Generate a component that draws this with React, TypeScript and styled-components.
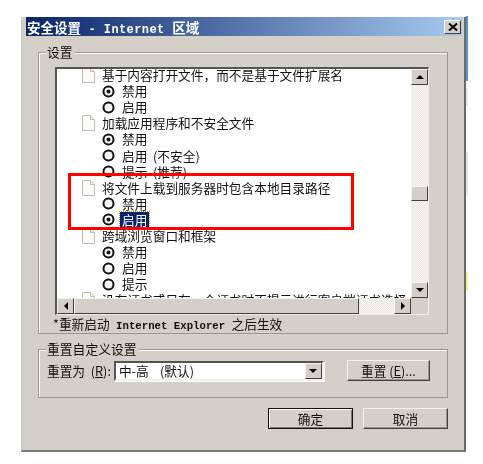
import React from "react";
import styled, { createGlobalStyle } from "styled-components";

const Global = createGlobalStyle`
  html, body { margin: 0; padding: 0; background: #fff; }
  body { width: 483px; height: 464px; overflow: hidden; font-family: "Noto Sans CJK SC", "Liberation Sans", sans-serif; }
  * { box-sizing: border-box; }
`;
const Page = styled.div`
  width: 483px; height: 464px; padding: 17px 17px 12px 21px; background: #fff; position: relative;
`;
const Dialog = styled.div`
  width: 445px; height: 435px; background: #d4d0c8; padding: 0 2px 3px 4px;
  border-right: 2px solid #6a6a6a; border-bottom: 2px solid #777;
  border-left: 1px solid #c8c5bc; display: flex; flex-direction: column; filter: blur(0.4px);
  color: #111; font-size: 12.7px;
`;
const BehindEdge = styled.div`
  position: absolute; left: 466px; top: 16px; width: 2px; height: 275px;
  background: linear-gradient(180deg,
    #5b93d2 0, #5b93d2 65px, #fff 65px, #fff 72px, #e8e8e8 72px, #e8e8e8 90px, #fff 90px,
    #fff 136px, #e6e6e6 136px, #e6e6e6 180px, #fff 180px, #fff 256px, #f5ee9a 256px, #f5ee9a 275px);
`;
const TitleBar = styled.div`
  height: 19px; flex: none; display: flex; align-items: center; justify-content: space-between;
  background: linear-gradient(90deg, #0a246a, #a6caf0); color: #fff; padding: 0 1px 0 1px; font-weight: 700; font-size: 13.5px; white-space: pre;
`;
const TitleMono = styled.span`font-family: "Liberation Mono", monospace; font-size: 12px; letter-spacing: 0.4px;`;
const NoteMono = styled.span`font-family: "Liberation Mono", monospace; font-size: 10.7px; font-weight: 700;`;
const CloseBtn = styled.div`
  width: 17px; height: 14px; background: #d4d0c8; display: flex; align-items: center; justify-content: center;
  border: 1px solid; border-color: #fff #404040 #404040 #fff;
`;
const Content = styled.div`
  flex: 1; display: flex; flex-direction: column; padding: 16px 14px 0 12px; min-height: 0;
`;
const Group = styled.div<{ $h: number; $mt?: number }>`
  height: ${p => p.$h}px; margin-top: ${p => p.$mt ?? 0}px; position: relative; flex: none;
  box-shadow: inset 0 0 0 1px #9a978f, inset 1px 1px 0 1px #fff;
`;
const Legend = styled.div`
  position: absolute; left: 8px; top: -9px; background: #d4d0c8; padding: 0 2px 0 1px; line-height: 17px; font-size: 12.8px;
`;
const GroupBody = styled.div`padding: 15px 0 0 17px;`;
const ListFrame = styled.div`
  width: 374px; height: 248px; background: #fff; position: relative; overflow: hidden;
  border-top: 2px solid #555; border-left: 2px solid #555; border-right: 1px solid #eee; border-bottom: 1px solid #eee;
  display: grid; grid-template-columns: 1fr 17px; grid-template-rows: 1fr 16px;
`;
const List = styled.div`overflow: hidden; padding: 0 0 0 25px;`;
const ListInner = styled.div`margin-top: -2px;`;
const Row = styled.div`
  height: 16.1px; display: flex; align-items: center; white-space: pre; line-height: 16px;
`;
const HeadRow = styled(Row)`gap: 7px;`;
const OptRow = styled(Row)`padding-left: 20px; gap: 7px;`;
const Selected = styled.span`
  background: #0a246a; color: #fff; outline: 1px dotted #c8a020; padding: 0 2px; margin-left: -2px; line-height: 15px;
`;
const VBar = styled.div`
  display: flex; flex-direction: column; justify-content: space-between; position: relative;
  background: repeating-conic-gradient(#e9e7e2 0 25%, #f6f5f2 0 50%) 0 0 / 2px 2px;
`;
const HBar = styled.div`
  display: flex;
  background: repeating-conic-gradient(#e9e7e2 0 25%, #f6f5f2 0 50%) 0 0 / 2px 2px;
`;
const SBtn = styled.div`
  width: 17px; height: 16px; flex: none; background: #d4d0c8; display: flex; align-items: center; justify-content: center;
  border: 1px solid; border-color: #f4f3ef #404040 #404040 #f4f3ef;
`;
const VThumb = styled(SBtn)`position: absolute; top: 117px; left: 0; height: 15px;`;
const HThumb = styled(SBtn)`width: 285px; margin-right: auto;`;
const Corner = styled.div`background: #d4d0c8;`;
const Note = styled.div`
  padding: 1px 0 0 0; margin-left: -2px; white-space: pre; line-height: 16px;
`;
const Tri = styled.div<{ $d: "up" | "down" | "left" | "right" }>`
  width: 0; height: 0; border: solid transparent;
  ${p => p.$d === "up" && "border-width: 0 4px 4px; border-bottom-color: #000;"}
  ${p => p.$d === "down" && "border-width: 4px 4px 0; border-top-color: #000;"}
  ${p => p.$d === "left" && "border-width: 4px 4px 4px 0; border-right-color: #000;"}
  ${p => p.$d === "right" && "border-width: 4px 0 4px 4px; border-left-color: #000;"}
`;
const ResetRow = styled.div`display: flex; align-items: center; padding: 11px 0 0 9px; white-space: pre;`;
const Select = styled.div`
  width: 210px; height: 20px; margin-left: 3px; background: #fff; display: flex; align-items: center; justify-content: space-between;
  border-top: 2px solid #555; border-left: 2px solid #555; border-right: 2px solid #f2f1ed; border-bottom: 2px solid #f2f1ed; padding-left: 3px;
  box-shadow: 1px 1px 0 #fff;
`;
const ResetButton = styled.div`margin-left: 23px;`;
const Button = styled.div<{ $w: number; $def?: boolean }>`
  width: ${p => p.$w}px; height: 21px; background: #d4d0c8; display: flex; align-items: center; justify-content: center; white-space: pre;
  border: 1px solid; border-color: ${p => p.$def ? "#111" : "#f4f3ef #404040 #404040 #f4f3ef"};
  box-shadow: ${p => p.$def ? "inset 1px 1px 0 #fff, inset -1px -1px 0 #777" : "inset -1px -1px 0 #999"};
`;
const Footer = styled.div`display: flex; justify-content: flex-end; gap: 10px; padding: 10px 0 0 0;`;
const Highlight = styled.div`
  position: absolute; left: 68px; top: 173px; width: 286px; height: 57px; border: 3px solid #f00;
`;
const U = styled.span`text-decoration: underline;`;

const Doc = () => (
  <svg width="13" height="16" viewBox="0 0 13 16" style={{ flex: "none" }}>
    <path d="M.5.5h8l4 4v11H.5z" fill="#fcfcfa" stroke="#bdbab0" />
    <path d="M8.500.5v4h4" fill="#eee" stroke="#bdbab0" />
  </svg>
);
const Radio = ({ on }: { on?: boolean }) => (
  <svg width="13" height="13" viewBox="0 0 13 13" style={{ flex: "none" }}>
    <circle cx="6.500" cy="6.500" r="5" fill="#fff" stroke="#111" strokeWidth="2" />
    {on && <circle cx="6.500" cy="6.500" r="2" fill="#111" />}
  </svg>
);
const Head = ({ t }: { t: string }) => <HeadRow><Doc /><span>{t}</span></HeadRow>;
const Opt = ({ t, on }: { t: string; on?: boolean }) => <OptRow><Radio on={on} /><span>{t}</span></OptRow>;

export default function App() {
  return (
    <Page>
      <Global />
      <BehindEdge />
      <Dialog>
        <TitleBar>
          <span>安全设置<TitleMono> - Internet </TitleMono>区域</span>
          <CloseBtn>
            <svg width="10" height="8" viewBox="0 0 10 8"><path d="M1 .5l8 7M9 .5l-8 7" fill="none" stroke="#000" strokeWidth="2" /></svg>
          </CloseBtn>
        </TitleBar>
        <Content>
          <Group $h={282}>
            <Legend>设置</Legend>
            <GroupBody>
              <ListFrame>
                <List>
                  <ListInner>
                    <Head t="基于内容打开文件，而不是基于文件扩展名" />
                    <Opt t="禁用" on />
                    <Opt t="启用" />
                    <Head t="加载应用程序和不安全文件" />
                    <Opt t="禁用" on />
                    <Opt t="启用  (不安全)" />
                    <Opt t="提示  (推荐)" />
                    <Head t="将文件上载到服务器时包含本地目录路径" />
                    <Opt t="禁用" />
                    <OptRow><Radio on /><Selected>启用</Selected></OptRow>
                    <Head t="跨域浏览窗口和框架" />
                    <Opt t="禁用" on />
                    <Opt t="启用" />
                    <Opt t="提示" />
                    <Head t="没有证书或只有一个证书时不提示进行客户端证书选择" />
                  </ListInner>
                </List>
                <VBar>
                  <SBtn><Tri $d="up" /></SBtn>
                  <VThumb />
                  <SBtn><Tri $d="down" /></SBtn>
                </VBar>
                <HBar>
                  <SBtn><Tri $d="left" /></SBtn>
                  <HThumb />
                  <SBtn><Tri $d="right" /></SBtn>
                </HBar>
                <Corner />
              </ListFrame>
              <Note>*重新启动<NoteMono> Internet Explorer </NoteMono>之后生效</Note>
            </GroupBody>
          </Group>
          <Group $h={49} $mt={15}>
            <Legend>重置自定义设置</Legend>
            <ResetRow>
              <span>重置为  (<U>R</U>):</span>
              <Select>
                <span>中-高    (默认)</span>
                <SBtn><Tri $d="down" /></SBtn>
              </Select>
              <ResetButton>
                <Button $w={83}>重置 (<U>E</U>)...</Button>
              </ResetButton>
            </ResetRow>
          </Group>
          <Footer>
            <Button $w={85} $def>确定</Button>
            <Button $w={85}>取消</Button>
          </Footer>
        </Content>
      </Dialog>
      <Highlight />
    </Page>
  );
}
